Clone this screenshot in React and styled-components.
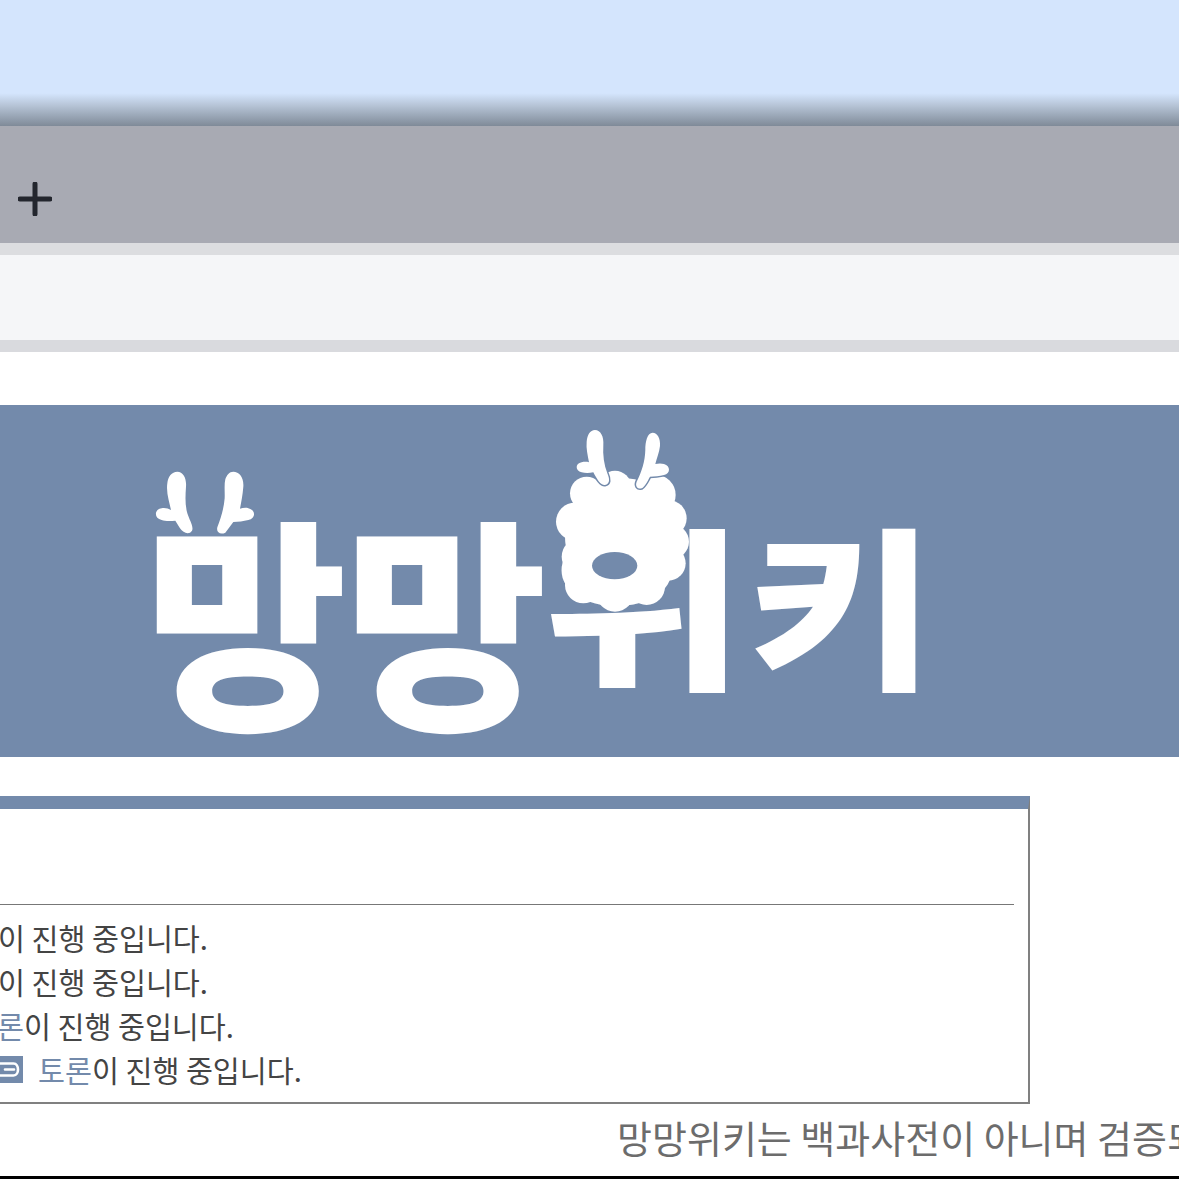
import styled, { createGlobalStyle } from "styled-components";

const BLUE = "#738aab";

const Global = createGlobalStyle`
  html, body {
    margin: 0;
    padding: 0;
    background: #fff;
    overflow: hidden;
  }
`;

const Page = styled.div`
  width: 1179px;
  height: 1179px;
  overflow: hidden;
  display: flex;
  flex-direction: column;
  background: #fff;
  font-family: "Noto Sans CJK KR", "Noto Sans", sans-serif;
`;

const Sky = styled.div`
  height: 126px;
  flex: none;
  background: linear-gradient(180deg, #d4e5fd 0%, #d4e5fd 74%, #b5c3d5 84%, #7f8a98 100%);
`;

const TabBar = styled.div`
  height: 117px;
  flex: none;
  display: flex;
  align-items: center;
  padding: 28px 0 0 18px;
  box-sizing: border-box;
  background: #a8aab3;
`;

const Strip = styled.div`
  height: 12px;
  flex: none;
  background: ${(p) => p.$color};
`;

const AddressBar = styled.div`
  height: 85px;
  flex: none;
  background: #f5f6f8;
`;

const Banner = styled.div`
  height: 352px;
  flex: none;
  margin-top: 53px;
  padding: 15px 0 0 140px;
  box-sizing: border-box;
  background: ${BLUE};
`;

const Box = styled.section`
  width: 1031px;
  margin: 39px 0 0 -1px;
  box-sizing: border-box;
  flex: none;
  height: 308px;
  border: solid #808080;
  border-width: 13px 2px 2px 0;
  border-top-color: ${BLUE};
  padding: 0 14px 0 0;
`;

const BoxTitle = styled.div`
  height: 95px;
  border-bottom: 1.5px solid #777;
`;

const Notices = styled.ul`
  list-style: none;
  margin: 10px 0 0;
  padding: 0;
`;

const Notice = styled.li`
  height: 44px;
  display: flex;
  align-items: center;
  margin-left: ${(p) => p.$shift}px;
  font-size: 29.3px;
  line-height: 44px;
  color: #444;
  white-space: nowrap;
`;

const TalkLink = styled.span`
  color: ${BLUE};
`;

const NoticeIcon = styled.svg`
  flex: none;
  display: block;
  margin-right: 15px;
`;

const Disclaimer = styled.p`
  margin: 7px 0 0 617px;
  font-size: 38px;
  line-height: 52px;
  color: #6c6c6c;
  white-space: nowrap;
`;

const BottomEdge = styled.div`
  height: 3px;
  flex: none;
  margin-top: auto;
  background: #000;
`;

const LogoSvg = styled.svg`
  display: block;
`;

const WordText = styled.text`
  font-family: "Noto Sans CJK KR", sans-serif;
  font-weight: 900;
  font-size: 232px;
  fill: #fff;
`;

const Antler = ({ d }) => (
  <path d={d} fill="#fff" stroke={BLUE} strokeWidth="9" paintOrder="stroke" strokeLinejoin="round" />
);

const puffs = [
  [140, 220, 50], [225, 200, 48], [345, 225, 62], [105, 305, 57], [385, 295, 55],
  [395, 365, 52], [120, 410, 55], [385, 430, 52], [130, 495, 55], [225, 518, 57],
  [320, 500, 55], [250, 350, 175],
];

const glyphs = [
  { ch: "망", x: 144.5, y: 712, sx: 0.95, sy: 0.97 },
  { ch: "망", x: 344.5, y: 712, sx: 0.95, sy: 0.97 },
  { ch: "위", x: 542, y: 676, sx: 0.95, sy: 0.75 },
  { ch: "키", x: 748, y: 676, sx: 0.875, sy: 0.75 },
];

const Logo = () => (
  <LogoSvg width="790" height="320" viewBox="140 420 790 320">
    {glyphs.map((g) => (
      <WordText key={g.x} transform={`translate(${g.x} ${g.y}) scale(${g.sx} ${g.sy})`}>
        {g.ch}
      </WordText>
    ))}

    <g transform="translate(130 420) scale(0.3333)">
      <Antler d="M142 155C160 155 170 175 168 200C166 230 165 255 172 280C178 300 192 320 186 332C178 345 160 340 150 325L136 302C120 304 105 304 95 300C72 296 72 268 95 265C105 263 115 266 123 270C118 245 108 220 112 190C114 170 125 155 142 155Z" />
      <Antler d="M310 155C328 155 342 172 340 200C338 225 334 245 330 266C338 264 348 262 355 265C378 270 378 296 355 300C340 304 325 306 310 306L286 338C272 345 258 338 262 322C272 295 282 265 284 235C285 215 282 195 286 178C290 165 298 155 310 155Z" />
    </g>

    <g transform="translate(540 420) scale(0.3333)">
      {puffs.map(([cx, cy, r]) => (
        <circle key={`${cx}-${cy}`} cx={cx} cy={cy} r={r} fill="#fff" />
      ))}
      <ellipse cx="224" cy="437" rx="68" ry="41" fill={BLUE} />
      <Antler d="M165 30C182 30 192 50 190 75C188 105 192 135 202 160C210 178 210 192 195 195C182 196 172 180 160 157C148 160 135 160 125 157C105 153 105 130 125 127C132 125 140 125 147 127C143 105 138 85 140 65C142 45 150 30 165 30Z" />
      <Antler d="M338 38C352 38 362 55 360 78C358 98 350 115 346 132C355 130 365 130 372 132C392 137 392 162 372 165C358 168 345 170 330 170C322 185 315 200 305 205C292 208 285 198 290 185C305 155 315 125 316 90C316 65 322 38 338 38Z" />
    </g>
  </LogoSvg>
);

const LinkIcon = () => (
  <NoticeIcon width="27" height="27" viewBox="0 0 27 27">
    <rect width="27" height="27" fill={BLUE} />
    <path d="M4 7.5H17.5C23.5 7.5 23.5 19.5 17.5 19.5H4M9 13.5H18" fill="none" stroke="#fff" strokeWidth="2.6" strokeLinecap="round" />
  </NoticeIcon>
);

export default function App() {
  return (
    <>
      <Global />
      <Page>
        <Sky />
        <TabBar>
          <svg width="34" height="34" viewBox="0 0 34 34">
            <path d="M17 2V32M2 17H32" stroke="#23262e" strokeWidth="5" strokeLinecap="round" />
          </svg>
        </TabBar>
        <Strip $color="#dcdde0" />
        <AddressBar />
        <Strip $color="#d9dade" />
        <Banner>
          <Logo />
        </Banner>
        <Box>
          <BoxTitle />
          <Notices>
            <Notice $shift={-1}>이 진행 중입니다.</Notice>
            <Notice $shift={-1}>이 진행 중입니다.</Notice>
            <Notice $shift={-2}>
              <TalkLink>론</TalkLink>이 진행 중입니다.
            </Notice>
            <Notice $shift={-3}>
              <LinkIcon />
              <TalkLink>토론</TalkLink>이 진행 중입니다.
            </Notice>
          </Notices>
        </Box>
        <Disclaimer>망망위키는 백과사전이 아니며 검증되지 않았거나</Disclaimer>
        <BottomEdge />
      </Page>
    </>
  );
}
